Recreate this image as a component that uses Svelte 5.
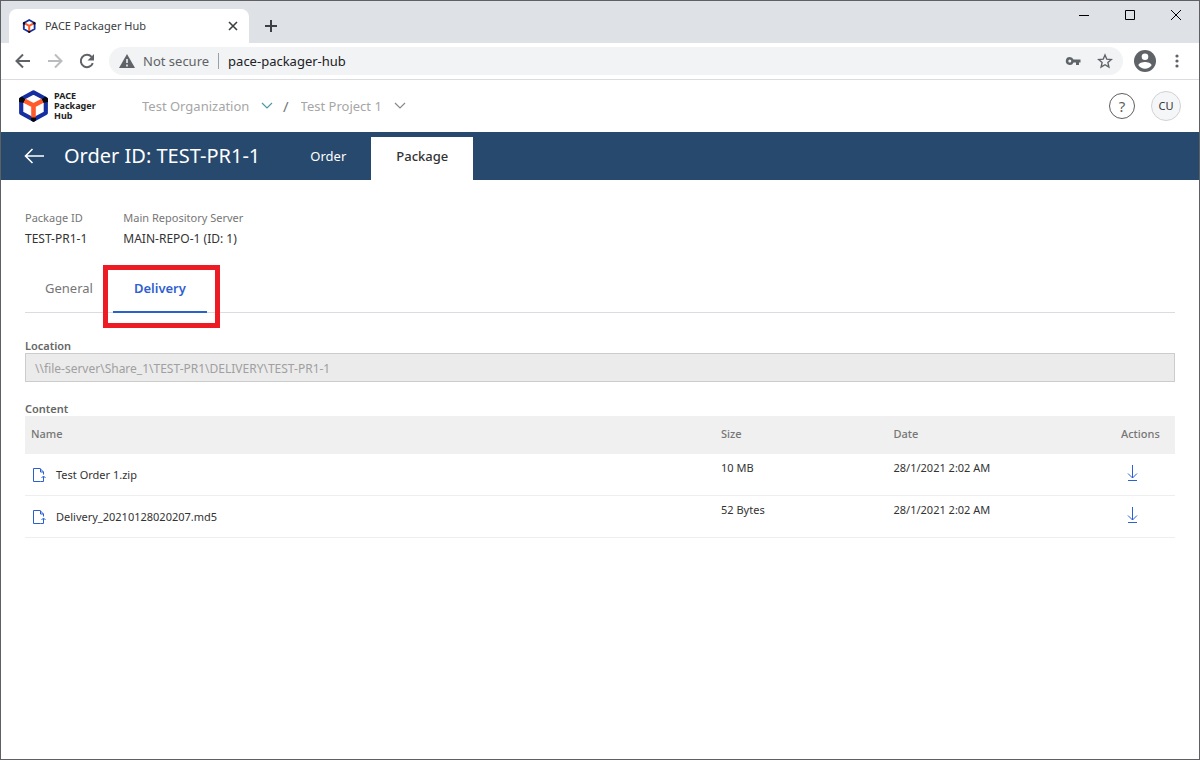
<script lang="ts">
	type DeliveryFile = { name: string; size: string; date: string };

	const files: DeliveryFile[] = [
		{ name: 'Test Order 1.zip', size: '10 MB', date: '28/1/2021 2:02 AM' },
		{ name: 'Delivery_20210128020207.md5', size: '52 Bytes', date: '28/1/2021 2:02 AM' }
	];

	let address = $state('pace-packager-hub');
	let organization = $state('Test Organization');
	let project = $state('Test Project 1');
	let activeTab = $state('Delivery');
	const location = '\\\\file-server\\Share_1\\TEST-PR1\\DELIVERY\\TEST-PR1-1';
</script>

{#snippet logo(size: number)}
	<svg width={size} height={size} viewBox="0 0 32 32" aria-hidden="true">
		<path d="M16.500 2.300 28.800 9v14L16.500 29.700 4.200 23V9z" fill="none" stroke="#162fa0" stroke-width="4.200" stroke-linejoin="round" />
		<path d="m2 8.500 3-2 3.500 3-1.500 3.500-5-1zM31 8.500l-3-2-3.500 3L26 13l5-1zM14 26.500h5v4L16.500 32 14 30.500z" fill="#08080c" />
		<path d="m7.500 10.800 9 4.700 9-4.700M16.500 15v12.500" fill="none" stroke="#ff5a2c" stroke-width="4.600" />
	</svg>
{/snippet}

{#snippet chevron()}
	<svg class="chevron" width="12" height="12" viewBox="0 0 12 12" aria-hidden="true">
		<path d="m1 3 5 5 5-5" fill="none" stroke="currentColor" stroke-width="1.200" />
	</svg>
{/snippet}

<div class="window">
	<div class="tab-strip">
		<div class="browser-tab">
			{@render logo(14)}
			<span class="tab-title">PACE Packager Hub</span>
			<button aria-label="Close tab">
				<svg width="10" height="10" viewBox="0 0 10 10"><path d="m1 1 8 8M9 1 1 9" stroke="#3c4043" stroke-width="1.600" /></svg>
			</button>
		</div>
		<button class="new-tab" aria-label="New tab">
			<svg width="12" height="12" viewBox="0 0 12 12"><path d="M6 0v12M0 6h12" stroke="#3c4043" stroke-width="2" /></svg>
		</button>
		<div class="window-controls">
			<button aria-label="Minimize">
				<svg width="12" height="12" viewBox="0 0 12 12"><path d="M1 6.500h10" stroke="#000" /></svg>
			</button>
			<button aria-label="Maximize">
				<svg width="12" height="12" viewBox="0 0 12 12"><path d="M1.500 1.500h9v9h-9z" fill="none" stroke="#000" /></svg>
			</button>
			<button aria-label="Close">
				<svg width="12" height="12" viewBox="0 0 12 12"><path d="m1 1 10 10M11 1 1 11" stroke="#000" /></svg>
			</button>
		</div>
	</div>

	<div class="toolbar">
		<button aria-label="Back">
			<svg width="16" height="16" viewBox="0 0 16 16"><path d="M15 8H2.500M8 1.500 1.500 8 8 14.500" fill="none" stroke="#5f6368" stroke-width="2" /></svg>
		</button>
		<button aria-label="Forward">
			<svg width="16" height="16" viewBox="0 0 16 16"><path d="M1 8h12.500M8 1.500 14.500 8 8 14.500" fill="none" stroke="#babcbe" stroke-width="2" /></svg>
		</button>
		<button aria-label="Reload">
			<svg width="16" height="16" viewBox="0 0 16 16">
				<path d="M13.800 10.200A6.200 6.200 0 1 1 12.600 3.800" fill="none" stroke="#5f6368" stroke-width="2" />
				<path d="M15 1v6.500H8.500z" fill="#5f6368" />
			</svg>
		</button>
		<div class="address-bar">
			<svg width="16" height="14" viewBox="0 0 16 14" aria-hidden="true">
				<path d="M8 0 16 14H0z" fill="#5f6368" />
				<path d="M8 5v4M8 10.500v2" stroke="#f1f3f4" stroke-width="1.600" />
			</svg>
			<span class="security">Not secure</span>
			<input type="text" aria-label="Address" bind:value={address} />
			<button aria-label="Passwords">
				<svg width="16" height="16" viewBox="0 0 16 16">
					<path fill-rule="evenodd" d="M4.800 4a4 4 0 1 0 3.700 5.500H11V12h3V9.500h1.500v-3h-7A4 4 0 0 0 4.800 4zm0 2.500a1.500 1.500 0 1 1 0 3 1.500 1.500 0 0 1 0-3z" fill="#5f6368" />
				</svg>
			</button>
			<button aria-label="Bookmark">
				<svg width="16" height="16" viewBox="0 0 16 16">
					<path d="m8 2 1.800 4.200 4.500.400-3.400 3 1 4.400L8 11.700 4.100 14l1-4.400-3.400-3 4.500-.400z" fill="none" stroke="#5f6368" stroke-width="1.400" />
				</svg>
			</button>
		</div>
		<button class="profile" aria-label="Profile">
			<svg width="22" height="22" viewBox="0 0 22 22">
				<circle cx="11" cy="11" r="11" fill="#5f6368" />
				<circle cx="11" cy="6.700" r="3.300" fill="#fff" />
				<path d="M4.400 15.300c0-2.200 4.400-3.400 6.600-3.400s6.600 1.200 6.600 3.400a8 8 0 0 1-13.200 0z" fill="#fff" />
			</svg>
		</button>
		<button aria-label="Menu">
			<svg width="4" height="14" viewBox="0 0 4 14" fill="#5f6368">
				<circle cx="2" cy="2" r="1.600" /><circle cx="2" cy="7" r="1.600" /><circle cx="2" cy="12" r="1.600" />
			</svg>
		</button>
	</div>

	<header class="app-header">
		<a class="brand" href="#home">
			{@render logo(32)}
			<span>PACE<br />Packager<br />Hub</span>
		</a>
		<nav class="breadcrumbs" aria-label="Breadcrumb">
			<label class="crumb org">
				<select aria-label="Organization" bind:value={organization}>
					<option>Test Organization</option>
				</select>
				{@render chevron()}
			</label>
			<span class="slash">/</span>
			<label class="crumb">
				<select aria-label="Project" bind:value={project}>
					<option>Test Project 1</option>
				</select>
				{@render chevron()}
			</label>
		</nav>
		<button class="help" aria-label="Help">?</button>
		<button class="avatar">CU</button>
	</header>

	<div class="order-bar">
		<a class="back" href="#orders" aria-label="Back to orders">
			<svg width="20" height="16" viewBox="0 0 20 16"><path d="M20 8H1.500M8.500 1l-7 7 7 7" fill="none" stroke="#fff" stroke-width="1.600" /></svg>
		</a>
		<h1>Order ID: TEST-PR1-1</h1>
		<nav>
			<a href="#order">Order</a>
			<a class="current" href="#package" aria-current="page">Package</a>
		</nav>
	</div>

	<main>
		<dl>
			<div>
				<dt>Package ID</dt>
				<dd>TEST-PR1-1</dd>
			</div>
			<div>
				<dt>Main Repository Server</dt>
				<dd>MAIN-REPO-1 (ID: 1)</dd>
			</div>
		</dl>

		<div class="tabs" role="tablist">
			{#each ['General', 'Delivery'] as tab}
				<button
					role="tab"
					class:active={activeTab === tab}
					aria-selected={activeTab === tab}
					onclick={() => (activeTab = tab)}
				>
					{tab}
				</button>
			{/each}
		</div>

		<label class="field-label" for="location">Location</label>
		<input id="location" class="location" type="text" value={location} disabled />

		<h2 class="field-label">Content</h2>
		<table>
			<thead>
				<tr>
					<th class="name">Name</th>
					<th class="size">Size</th>
					<th>Date</th>
					<th class="actions">Actions</th>
				</tr>
			</thead>
			<tbody>
				{#each files as file}
					<tr>
						<td>
							<span class="file">
								<svg width="14" height="16" viewBox="0 0 14 16" aria-hidden="true">
									<path d="M8.500 14.500h-7v-13H8l3.500 3.500v2.500M8.500 1.500v3.500h3M11.500 14.500V9.500M9.500 11l2-2 2 2M8.500 14.500h3" fill="none" stroke="#2b5fd0" />
								</svg>
								{file.name}
							</span>
						</td>
						<td>{file.size}</td>
						<td>{file.date}</td>
						<td class="actions">
							<button aria-label="Download {file.name}">
								<svg width="11" height="17" viewBox="0 0 11 17"><path d="M5.500 0v13M1 8.500 5.500 13 10 8.500M1 15.500h9" fill="none" stroke="#2b5fd8" /></svg>
							</button>
						</td>
					</tr>
				{/each}
			</tbody>
		</table>
	</main>
</div>

<style>
	:global(body) {
		background: #fff;
	}

	.window {
		box-sizing: border-box;
		min-height: 100vh;
		border: 1px solid #5f6063;
		color: #333;
		font: 13px/20px 'Noto Sans', 'Open Sans', sans-serif;
	}

	button {
		display: flex;
		align-items: center;
		justify-content: center;
		padding: 0;
		border: none;
		background: none;
		color: inherit;
		font: inherit;
		cursor: pointer;
	}

	svg {
		display: block;
		flex: none;
	}

	a {
		color: inherit;
		text-decoration: none;
	}

	/* browser chrome */
	.tab-strip {
		display: flex;
		height: 42px;
		padding-left: 8px;
		background: #dee1e6;
	}

	.browser-tab {
		display: flex;
		align-items: center;
		gap: 9px;
		box-sizing: border-box;
		width: 240px;
		margin-top: 8px;
		padding: 0 11px 0 13px;
		border-radius: 8px 8px 0 0;
		background: #fff;
		color: #3c4043;
		font-size: 11px;
	}

	.tab-title {
		flex: 1;
	}

	.new-tab {
		width: 28px;
		margin: 8px 0 0 8px;
	}

	.window-controls {
		display: flex;
		height: 28px;
		margin-left: auto;
	}

	.window-controls button {
		width: 46px;
	}

	.toolbar {
		display: flex;
		align-items: center;
		gap: 16px;
		height: 36px;
		padding: 0 20px 0 14px;
		border-bottom: 1px solid #dadce0;
	}

	.address-bar {
		display: flex;
		align-items: center;
		gap: 8px;
		flex: 1;
		height: 28px;
		margin-left: -2px;
		padding: 0 10px;
		border-radius: 14px;
		background: #f1f3f4;
	}

	.address-bar button {
		margin-left: 8px;
	}

	.security {
		padding-right: 9px;
		border-right: 1px solid #9aa0a6;
		color: #5f6368;
		line-height: 16px;
	}

	.address-bar input {
		flex: 1;
		min-width: 0;
		padding: 0 0 0 1px;
		border: none;
		background: none;
		color: #202124;
		font: inherit;
	}

	.profile {
		margin: 0 3px 0 -5px;
	}

	/* application header */
	.app-header {
		display: flex;
		align-items: center;
		height: 52px;
		padding: 0 18px 0 16px;
	}

	.brand {
		display: flex;
		align-items: center;
		gap: 5px;
		width: 125px;
		color: #222;
		font-size: 9px;
		font-weight: 700;
		line-height: 10px;
	}

	.breadcrumbs {
		display: flex;
		align-items: center;
		flex: 1;
		gap: 10px;
		color: #767676;
	}

	.slash {
		padding-right: 2px;
		font-size: 15px;
	}

	.crumb {
		display: grid;
		align-items: center;
		color: #8a8886;
	}

	.crumb.org {
		color: #4a9aa5;
	}

	.crumb select {
		grid-area: 1 / 1;
		padding: 0 23px 0 0;
		border: none;
		appearance: none;
		background: none;
		color: #a6a6a6;
		font: inherit;
	}

	.crumb .chevron {
		grid-area: 1 / 1;
		justify-self: end;
		pointer-events: none;
	}

	.help {
		box-sizing: border-box;
		width: 26px;
		height: 26px;
		margin-right: 16px;
		border: 1px solid #605e5c;
		border-radius: 50%;
		color: #605e5c;
		font-size: 15px;
	}

	.avatar {
		box-sizing: border-box;
		width: 30px;
		height: 30px;
		border: 1px solid #d2d2d2;
		border-radius: 50%;
		background: #f5f6f8;
		font-size: 11px;
	}

	.order-bar {
		display: flex;
		align-items: center;
		height: 48px;
		padding-left: 23px;
		background: #27496d;
		color: #fff;
	}

	.order-bar h1 {
		margin: 0 25px 0 20px;
		font-size: 20px;
		font-weight: 400;
		line-height: 28px;
	}

	.order-bar nav {
		display: flex;
		align-self: flex-end;
	}

	.order-bar nav a {
		padding: 9px 25px 14px;
	}

	.order-bar nav .current {
		background: #fff;
		color: #333;
		font-weight: 500;
	}

	/* package page */
	main {
		padding: 27px 24px;
		font-size: 11px;
	}

	dl {
		display: flex;
		gap: 36px;
		margin: 0 0 16px;
	}

	dt,
	dd {
		margin: 0;
		line-height: 21px;
	}

	dt {
		color: #767676;
	}

	dd {
		font-size: 12px;
	}

	.tabs {
		display: flex;
		height: 47px;
		margin-bottom: 25px;
		border-bottom: 1px solid #dadce2;
	}

	.tabs button {
		position: relative;
		align-items: flex-start;
		height: 48px;
		padding: 13px 20px 0;
		border-bottom: 2px solid transparent;
		box-sizing: border-box;
		color: #767676;
		font-size: 13px;
	}

	.tabs .active {
		padding: 13px 21px 0;
		border-color: #2b62c9;
		color: #2f5fd0;
		font-weight: 600;
	}

	/* highlight frame around the selected tab */
	.tabs .active::after {
		content: '';
		position: absolute;
		inset: 0 -13px -17px -10px;
		border: 5px solid #ed1c24;
	}

	.field-label {
		display: block;
		margin: 0;
		color: #666;
		font-size: 11px;
		font-weight: 600;
		line-height: 15px;
	}

	.location {
		display: block;
		box-sizing: border-box;
		width: 100%;
		height: 29px;
		margin-bottom: 19px;
		padding: 1px 9px 0;
		border: 1px solid #ccc;
		background: #ebebeb;
		color: #a0a0a0;
		font: inherit;
		font-size: 12px;
	}

	table {
		width: 100%;
		border-spacing: 0;
		table-layout: fixed;
	}

	th {
		height: 38px;
		padding: 0 6px 2px;
		background: #f0f0f0;
		color: #767676;
		font-weight: 500;
		line-height: 16px;
		text-align: left;
	}

	.name {
		width: 60%;
	}

	.size {
		width: 15%;
	}

	th.actions {
		width: 60px;
	}

	th,
	td {
		box-sizing: border-box;
	}

	td {
		height: 42px;
		padding: 4px 6px;
		border-bottom: 1px solid #eee;
		vertical-align: top;
	}

	.file {
		display: flex;
		align-items: center;
		gap: 10px;
		padding: 7px 1px 0;
	}

	td.actions button {
		padding: 7px 6px 0;
	}
</style>
